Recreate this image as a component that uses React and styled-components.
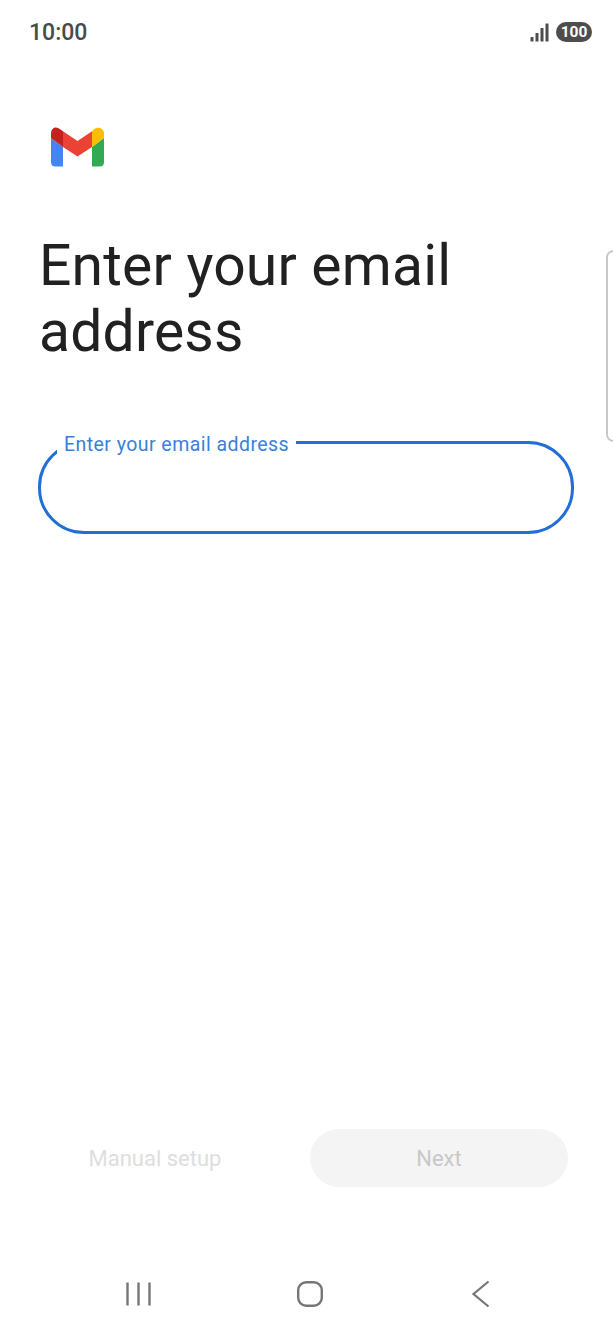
import styled, { createGlobalStyle } from "styled-components";

const GlobalStyle = createGlobalStyle`
  html, body {
    margin: 0;
    padding: 0;
    background: #fff;
  }
  * {
    box-sizing: border-box;
  }
`;

const App = () => {
  return (
    <>
      <GlobalStyle />
      <Screen>
        <StatusBar>
          <Clock>10:00</Clock>
          <StatusIcons>
            <svg width="19" height="19" viewBox="0 0 19 19">
              <g fill="#4d4d4d">
                <rect x="0.5" y="14" width="3" height="4.5" rx="0.5" />
                <rect x="5.5" y="10" width="3" height="8.5" rx="0.5" />
                <rect x="10.5" y="5" width="3" height="13.5" rx="0.5" />
                <rect x="15.5" y="0.5" width="3" height="18" rx="0.5" />
              </g>
            </svg>
            <Battery>100</Battery>
          </StatusIcons>
        </StatusBar>

        <Logo>
          <svg width="53" height="40" viewBox="0 0 53 40">
            <path d="M0 11 L0 35 Q0 39.5 4.5 39.5 L12 39.5 L12 20 Z" fill="#4285f4" />
            <path d="M41 20 L41 39.5 L48.5 39.5 Q53 39.5 53 35 L53 11 Z" fill="#34a853" />
            <path d="M41 4.3 L41 20 L53 11 L53 7 C53 0.5 45.5 -1.5 41 4.3 Z" fill="#fbbc04" />
            <path d="M12 20 L12 4.3 L26.5 14 L41 4.3 L41 20 L26.5 29.5 Z" fill="#ea4335" />
            <path d="M0 7 L0 11 L12 20 L12 4.3 L9.5 2.5 C5 -1.5 0 0.5 0 7 Z" fill="#c5221f" />
          </svg>
        </Logo>

        <Title>Enter your email address</Title>

        <Field>
          <FieldLabel>Enter your email address</FieldLabel>
        </Field>

        <Spacer />

        <Actions>
          <ManualSetup>Manual setup</ManualSetup>
          <NextButton>Next</NextButton>
        </Actions>

        <NavBar>
          <svg width="26" height="26" viewBox="0 0 26 26">
            <g stroke="#767676" strokeWidth="2.4" fill="none">
              <path d="M2.5 1.5 V24.5" />
              <path d="M13.5 1.5 V24.5" />
              <path d="M24.5 1.5 V24.5" />
            </g>
          </svg>
          <svg width="26" height="26" viewBox="0 0 26 26">
            <rect x="1.2" y="1.2" width="23.6" height="23.6" rx="8" stroke="#767676" strokeWidth="2.4" fill="none" />
          </svg>
          <svg width="26" height="28" viewBox="0 0 26 28">
            <path d="M20.5 1.5 L5.5 14 L20.5 26.5" stroke="#767676" strokeWidth="2.2" fill="none" />
          </svg>
        </NavBar>

        <EdgeHandle />
      </Screen>
    </>
  );
};

export default App;

const Screen = styled.div`
  position: relative;
  width: 613px;
  height: 1330px;
  display: flex;
  flex-direction: column;
  overflow: hidden;
  background: #fff;
  font-family: Roboto, "Liberation Sans", sans-serif;
`;

const StatusBar = styled.div`
  display: flex;
  align-items: center;
  justify-content: space-between;
  height: 64px;
  padding: 0 21px 0 29px;
`;

const Clock = styled.span`
  font-size: 23px;
  font-weight: 500;
  color: #4a4a4a;
`;

const StatusIcons = styled.div`
  display: flex;
  align-items: center;
  gap: 7px;
`;

const Battery = styled.span`
  display: flex;
  align-items: center;
  justify-content: center;
  width: 36px;
  height: 20px;
  border-radius: 10px;
  background: #4d4d4d;
  color: #fff;
  font-size: 15.5px;
  font-weight: 700;
`;

const Logo = styled.div`
  display: flex;
  height: 40px;
  margin: 63px 0 0 51px;
`;

const Title = styled.h1`
  width: 500px;
  margin: 66px 0 0 39px;
  font-size: 57px;
  font-weight: 400;
  line-height: 66px;
  letter-spacing: 0.2px;
  color: #212121;
`;

const Field = styled.div`
  position: relative;
  width: 536px;
  height: 93px;
  margin: 76px 0 0 38px;
  border: 3px solid #1f6fd6;
  border-radius: 46px;
`;

const FieldLabel = styled.span`
  position: absolute;
  left: 16px;
  top: -11px;
  padding: 0 7px 3px 7px;
  background: #fff;
  font-size: 19.5px;
  line-height: 23px;
  letter-spacing: 0.45px;
  color: #3a7fd9;
`;

const Spacer = styled.div`
  flex: 1;
`;

const Actions = styled.div`
  display: flex;
  align-items: center;
  padding: 0 45px 0 39px;
  margin-bottom: 93px;
`;

const ManualSetup = styled.span`
  width: 232px;
  margin-right: 39px;
  text-align: center;
  font-size: 22px;
  color: #dedede;
`;

const NextButton = styled.div`
  display: flex;
  align-items: center;
  justify-content: center;
  width: 258px;
  height: 58px;
  border-radius: 29px;
  background: #f4f4f4;
  font-size: 22px;
  color: #c8c8c8;
`;

const NavBar = styled.div`
  display: flex;
  align-items: center;
  justify-content: space-between;
  height: 28px;
  padding: 0 119px 0 125px;
  margin-bottom: 22px;
`;

const EdgeHandle = styled.div`
  position: absolute;
  top: 250px;
  right: -8px;
  width: 15px;
  height: 192px;
  border: 2px solid #c8c8c8;
  border-radius: 8px;
`;
